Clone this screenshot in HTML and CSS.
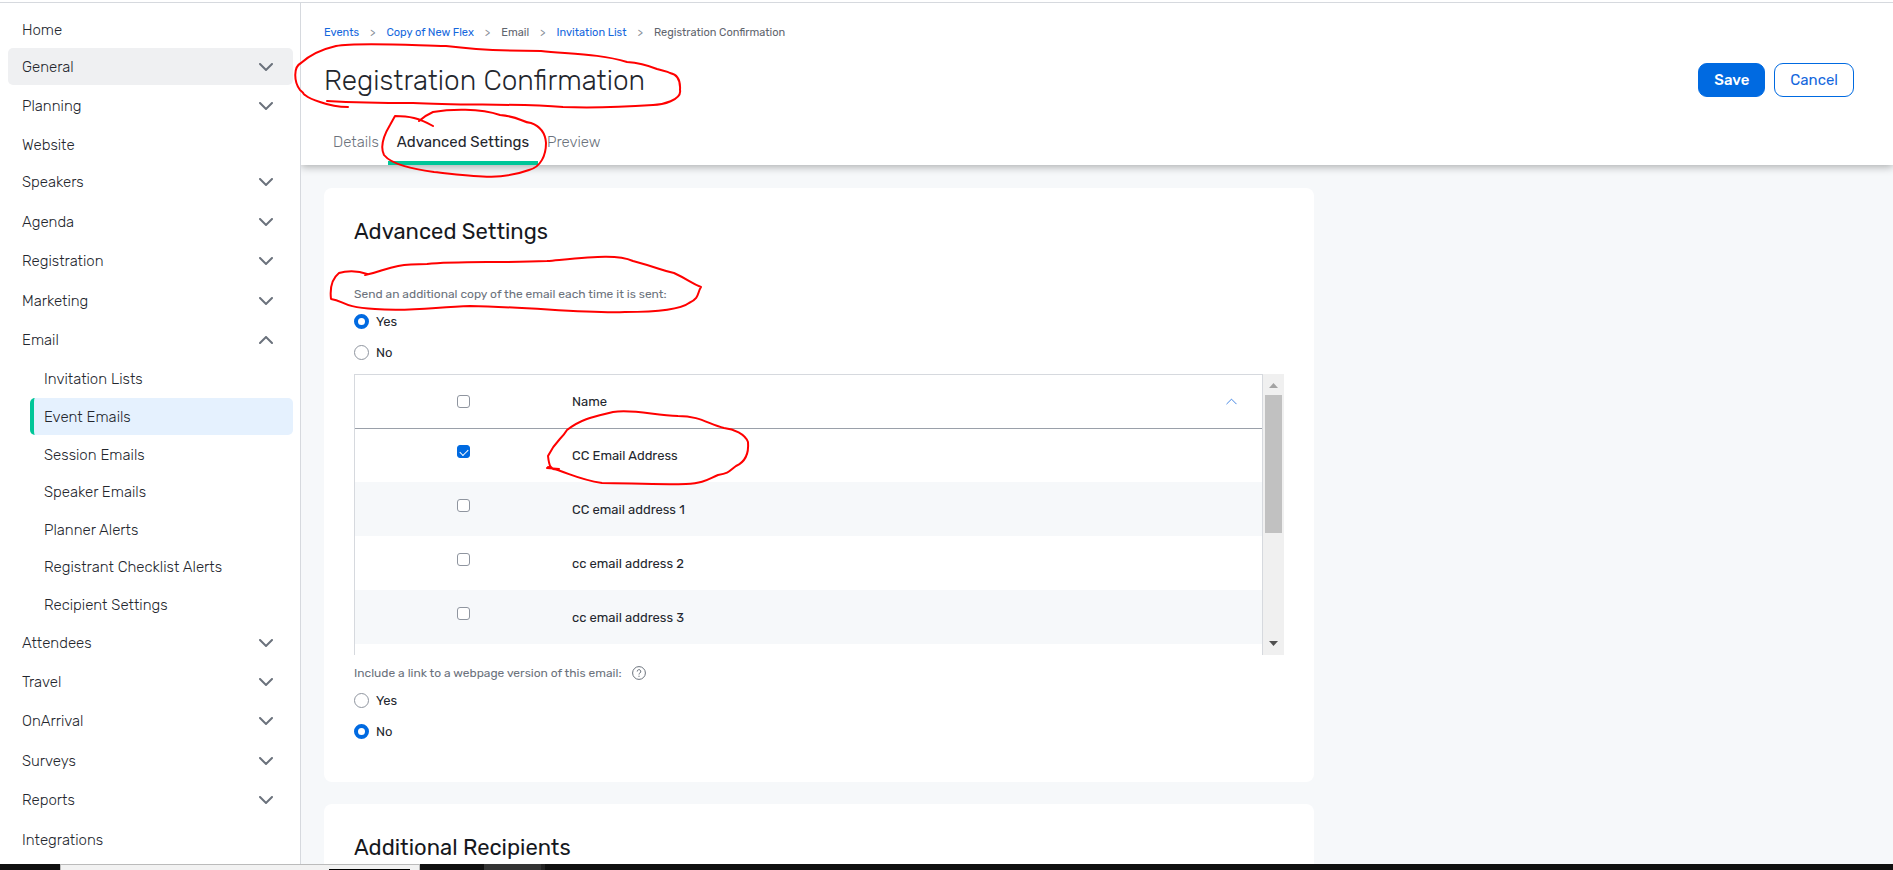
FILE: index.html
```html
<!DOCTYPE html>
<html lang="en">

<head>
    <meta charset="UTF-8">
    <meta name="viewport" content="width=device-width, initial-scale=1.0">
    <title>Registration Confirmation</title>
    <link rel="stylesheet" href="styles.css">
</head>

<body>

    <svg class="symbols" aria-hidden="true">
        <symbol id="chevron" viewBox="0 0 14 8">
            <path d="M1 1l6 6 6-6" fill="none" stroke="currentColor" stroke-linecap="round" />
        </symbol>
    </svg>

    <div class="app">
        <nav class="sidebar" aria-label="Event">
            <ul class="menu">
                <li><a href="#">Home</a></li>
                <li class="group"><button type="button" class="active">General <svg class="chevron"><use href="#chevron" /></svg></button></li>
                <li class="group"><button type="button">Planning <svg class="chevron"><use href="#chevron" /></svg></button></li>
                <li><a href="#">Website</a></li>
                <li class="group"><button type="button">Speakers <svg class="chevron"><use href="#chevron" /></svg></button></li>
                <li class="group"><button type="button">Agenda <svg class="chevron"><use href="#chevron" /></svg></button></li>
                <li class="group"><button type="button">Registration <svg class="chevron"><use href="#chevron" /></svg></button></li>
                <li class="group"><button type="button">Marketing <svg class="chevron"><use href="#chevron" /></svg></button></li>
                <li class="group"><button type="button" aria-expanded="true">Email <svg class="chevron up"><use href="#chevron" /></svg></button></li>
                <li class="sub"><a href="#">Invitation Lists</a></li>
                <li class="sub"><a href="#" class="current">Event Emails</a></li>
                <li class="sub"><a href="#">Session Emails</a></li>
                <li class="sub"><a href="#">Speaker Emails</a></li>
                <li class="sub"><a href="#">Planner Alerts</a></li>
                <li class="sub"><a href="#">Registrant Checklist Alerts</a></li>
                <li class="sub"><a href="#">Recipient Settings</a></li>
                <li class="group"><button type="button">Attendees <svg class="chevron"><use href="#chevron" /></svg></button></li>
                <li class="group"><button type="button">Travel <svg class="chevron"><use href="#chevron" /></svg></button></li>
                <li class="group"><button type="button">OnArrival <svg class="chevron"><use href="#chevron" /></svg></button></li>
                <li class="group"><button type="button">Surveys <svg class="chevron"><use href="#chevron" /></svg></button></li>
                <li class="group"><button type="button">Reports <svg class="chevron"><use href="#chevron" /></svg></button></li>
                <li><a href="#">Integrations</a></li>
            </ul>
        </nav>

        <main class="main">
            <nav class="breadcrumb" aria-label="Breadcrumb">
                <a href="#">Events</a>
                <span class="sep">&gt;</span>
                <a href="#">Copy of New Flex</a>
                <span class="sep">&gt;</span>
                <span>Email</span>
                <span class="sep">&gt;</span>
                <a href="#">Invitation List</a>
                <span class="sep">&gt;</span>
                <span>Registration Confirmation</span>
            </nav>

            <header class="header">
                <div class="title-row">
                    <h1>Registration Confirmation</h1>
                    <div class="actions">
                        <button type="button" class="btn primary">Save</button>
                        <button type="button" class="btn">Cancel</button>
                    </div>
                </div>
                <div class="tabs">
                    <a href="#">Details</a>
                    <a href="#" class="selected">Advanced Settings</a>
                    <a href="#">Preview</a>
                </div>
            </header>

            <div class="content">
                <section class="card">
                    <h2>Advanced Settings</h2>

                    <fieldset>
                        <legend>Send an additional copy of the email each time it is sent:</legend>
                        <label class="radio"><input type="radio" name="copy" checked> Yes</label>
                        <label class="radio"><input type="radio" name="copy"> No</label>
                    </fieldset>

                    <div class="list">
                        <div class="list-view">
                            <table>
                                <thead>
                                    <tr>
                                        <th class="check"><input type="checkbox" aria-label="Select all"></th>
                                        <th>
                                            <div class="sort">Name <svg class="sort-icon up"><use href="#chevron" /></svg></div>
                                        </th>
                                    </tr>
                                </thead>
                                <tbody>
                                    <tr>
                                        <td class="check"><input type="checkbox" id="cc0" checked></td>
                                        <td><label for="cc0">CC Email Address</label></td>
                                    </tr>
                                    <tr>
                                        <td class="check"><input type="checkbox" id="cc1"></td>
                                        <td><label for="cc1">CC email address 1</label></td>
                                    </tr>
                                    <tr>
                                        <td class="check"><input type="checkbox" id="cc2"></td>
                                        <td><label for="cc2">cc email address 2</label></td>
                                    </tr>
                                    <tr>
                                        <td class="check"><input type="checkbox" id="cc3"></td>
                                        <td><label for="cc3">cc email address 3</label></td>
                                    </tr>
                                </tbody>
                            </table>
                        </div>
                        <div class="scrollbar" aria-hidden="true">
                            <svg class="arrow" viewBox="0 0 9 5"><path d="M0 5L4.500 0 9 5z" fill="#a3a3a3" /></svg>
                            <div class="thumb"></div>
                            <svg class="arrow" viewBox="0 0 9 5"><path d="M0 0L4.500 5 9 0z" fill="#505050" /></svg>
                        </div>
                    </div>

                    <fieldset>
                        <legend>Include a link to a webpage version of this email:
                            <svg class="help" viewBox="0 0 14 14" fill="none" stroke="currentColor">
                                <circle cx="7" cy="7" r="6.400" />
                                <path d="M5.200 5.500a1.800 1.800 0 1 1 2.700 1.500c-.6.400-.9.700-.9 1.500M7 9.700v1.200" />
                            </svg>
                        </legend>
                        <label class="radio"><input type="radio" name="webpage"> Yes</label>
                        <label class="radio"><input type="radio" name="webpage" checked> No</label>
                    </fieldset>
                </section>

                <section class="card">
                    <h2>Additional Recipients</h2>
                </section>
            </div>
        </main>
    </div>

    <footer class="taskbar">
        <div class="search"><span></span></div>
        <div class="task"></div>
    </footer>

    <!-- hand-drawn marks over the page -->
    <svg class="marks" viewBox="0 0 1893 870" aria-hidden="true">
        <path d="M348 107q-14 0-28-5-10-3-15-7c-2-1 0-1-5-5C294 82 293 67 301 63c10-9 22-14 35-17 20-4 70-1 110 0 24 3 50 5 95 5 30 3 60 3 86 11 15 1 25 5 30 7 6 2 10 2 13 4q11 2 10 17c2 10-18 15-27 15-30 2-60 3-90 2-50-4-100-1-150-4q-50 0-86-2" />
        <path d="M433 126c-14-8-24-10-38-10l-5 9c-9 15-9 24-6 30 8 10 30 14 50 17 40 4 65 9 95-2 12-3 17-15 17-27q-1-15-15-20c-10-1-10-6-31-8-20-7-50-6-67-3q-7 3-14 9" />
        <path d="M367 274c-10-4-22-3-28-1q-10 8-8 26c14 2 10 8 44 10 35 3 60-2 95-3 60 1 120 8 155 6 30 0 55-2 64-9 11-5 8-10 12-16-10-4-12-7-27-14-14-3-15-5-41-12-16-7-40-4-86 0-50 2-90 0-120 3-40 0-40 7-62 11" />
        <path d="M547 468l12 1c-9 2-10-4-11-13 8-16 13-16 19-26 15-12 30-14 46-18 20-3 40 3 65 4 22 0 30 8 46 12 10 1 21 6 24 14 1 12-3 20-12 24-7 5-6 7-18 9-10 4-13 8-32 9-30 1-60-1-84-1-25-4-30-9-54-16" />
    </svg>

</body>

</html>
```
FILE: styles.css
```css
* {
    box-sizing: border-box;
}

body {
    margin: 0;
    height: 100vh;
    display: flex;
    flex-direction: column;
    background: #fff;
    color: #23262d;
    font-family: Rubik, Roboto, sans-serif;
    font-size: 13px;
}

a {
    color: inherit;
    text-decoration: none;
}

button {
    font: inherit;
    color: inherit;
    cursor: pointer;
}

.symbols {
    display: none;
}

.app {
    flex: 1;
    min-height: 0;
    display: flex;
    overflow: hidden;
    margin-top: 2px;
    border-top: 1px solid #d6d9de;
}

/* sidebar */
.sidebar {
    flex: none;
    width: 301px;
    padding: 8px 7px 6px 8px;
    border-right: 1px solid #d6d9de;
}

.menu {
    height: 100%;
    margin: 0;
    padding: 0;
    list-style: none;
    display: flex;
    flex-direction: column;
}

.menu li {
    flex: 0 0 37px;
}

.menu li.group {
    flex-grow: 4;
}

.menu li.sub {
    flex-grow: 1;
    padding-left: 22px;
}

.menu a,
.menu button {
    display: flex;
    align-items: center;
    justify-content: space-between;
    width: 100%;
    height: 37px;
    padding: 0 20px 0 14px;
    border: 0;
    border-radius: 5px;
    background: none;
    font-size: 15px;
    font-weight: 300;
}

.menu button.active {
    background: #eff0f2;
}

.menu a.current {
    border-left: 4px solid #00c698;
    padding-left: 10px;
    background: #e5f1fe;
}

.chevron {
    width: 14px;
    height: 8px;
    color: #6b727c;
    stroke-width: 2;
}

.up {
    transform: rotate(180deg);
}

/* header */
.main {
    flex: 1;
    min-width: 0;
    background: #f6f8fa;
}

.breadcrumb {
    display: flex;
    align-items: center;
    gap: 11px;
    height: 37px;
    padding: 22px 23px 0;
    line-height: 15px;
    background: #fff;
    color: #5f656e;
    font-size: 11px;
}

.breadcrumb a {
    color: #1467dd;
}

.breadcrumb .sep {
    color: #8a9099;
}

.header {
    height: 125px;
    padding: 23px 39px 0 23px;
    display: flex;
    flex-direction: column;
    justify-content: space-between;
    background: #fff;
    box-shadow: 0 2px 8px rgba(0, 0, 0, 0.3);
    clip-path: inset(0 0 -14px 0);
}

.title-row {
    display: flex;
    align-items: flex-start;
    justify-content: space-between;
}

h1 {
    margin: 0;
    font-size: 28px;
    font-weight: 300;
    line-height: 36px;
}

.actions {
    display: flex;
    gap: 9px;
}

.btn {
    height: 34px;
    padding: 0 15px;
    border: 1px solid #006ae1;
    border-radius: 9px;
    background: #fff;
    color: #1467dd;
    font-size: 15px;
}

.btn.primary {
    background: #006ae1;
    color: #fff;
    font-weight: 500;
}

.tabs {
    display: flex;
}

.tabs a {
    height: 42px;
    padding: 0 9px;
    border-bottom: 4px solid transparent;
    line-height: 38px;
    font-size: 15px;
    font-weight: 300;
    color: #6b727c;
}

.tabs a.selected {
    border-color: #00c698;
    color: #23262d;
    font-weight: 400;
}

/* content */
.content {
    display: flex;
    flex-direction: column;
    gap: 22px;
    max-width: 1013px;
    padding: 23px 0 0 23px;
}

.card {
    padding: 30px 30px 41px;
    border-radius: 8px;
    background: #fff;
}

h2 {
    margin: 0 0 37px;
    font-size: 22px;
    font-weight: 400;
    line-height: 27px;
    color: #16181d;
}

fieldset {
    display: flex;
    flex-direction: column;
    gap: 11px;
    margin: 0;
    padding: 0;
    border: 0;
}

legend {
    display: flex;
    align-items: center;
    gap: 10px;
    padding: 0;
    margin-bottom: 5px;
    line-height: 24px;
    font-size: 12px;
    color: #6b727c;
}

.help {
    width: 14px;
    height: 14px;
}

.radio {
    display: flex;
    align-items: center;
    gap: 7px;
    height: 20px;
}

input {
    appearance: none;
    flex: none;
    margin: 0;
    border: 1px solid #8f959f;
    background: #fff;
}

input[type="radio"] {
    width: 15px;
    height: 15px;
    border-radius: 50%;
}

input[type="radio"]:checked {
    border: 4px solid #006ae1;
}

input[type="checkbox"] {
    display: block;
    width: 13px;
    height: 13px;
    margin: 0 auto;
    border-radius: 3px;
}

input[type="checkbox"]:checked {
    border-color: #006ae1;
    background: #006ae1;
}

input[type="checkbox"]:checked::after {
    content: "";
    display: block;
    width: 7px;
    height: 4px;
    margin: 3px 2px;
    border: solid #fff;
    border-width: 0 0 1px 1px;
    transform: rotate(-45deg);
}

/* address list */
.list {
    display: flex;
    height: 281px;
    margin: 12px 0 6px;
}

.list-view {
    flex: 1;
    overflow: hidden;
    border: 1px solid #d6d9de;
    border-bottom: 0;
}

table {
    width: 100%;
    border-collapse: collapse;
    table-layout: fixed;
}

th,
td {
    height: 54px;
    padding: 0;
    text-align: left;
    font-weight: 400;
}

th {
    height: 53px;
    border-bottom: 1px solid #9aa0a9;
}

.check {
    width: 217px;
}

td.check {
    padding-bottom: 7px;
}

tbody tr:nth-child(even) {
    background: #f6f8fa;
}

.sort {
    display: flex;
    align-items: center;
    justify-content: space-between;
    padding-right: 25px;
}

.sort-icon {
    width: 11px;
    height: 7px;
    color: #1467dd;
    stroke-width: 1;
}

.scrollbar {
    display: flex;
    flex-direction: column;
    align-items: center;
    width: 21px;
    padding: 9px 2px;
    background: #f0f0f0;
}

.arrow {
    width: 9px;
    height: 5px;
}

.thumb {
    width: 17px;
    height: 138px;
    margin: 7px 0 auto;
    background: #c1c1c1;
}

/* taskbar */
.taskbar {
    flex: none;
    display: flex;
    height: 6px;
    padding-left: 60px;
    background: #101010;
}

.search {
    width: 360px;
    padding: 4px 9px 0 268px;
    border: 1px solid #bbb;
    border-bottom: 0;
    background: #f2f2f2;
}

.search span {
    display: block;
    height: 1px;
    background: #000;
}

.task {
    width: 61px;
    margin-left: 64px;
    background: #333;
    border-right: 4px solid #222;
}

.marks {
    position: absolute;
    top: 0;
    left: 0;
    width: 1893px;
    height: 870px;
    pointer-events: none;
    fill: none;
    stroke: #f00;
    stroke-width: 2;
    stroke-linecap: round;
    stroke-linejoin: round;
}
```
